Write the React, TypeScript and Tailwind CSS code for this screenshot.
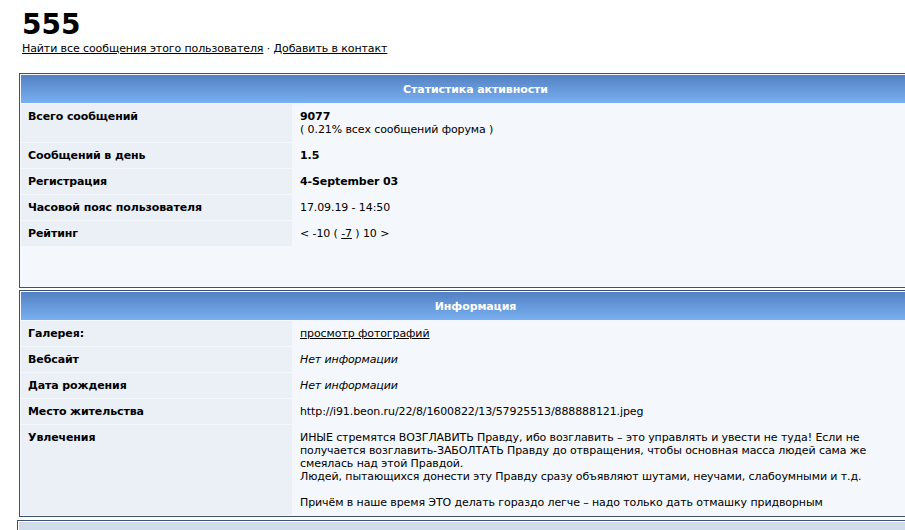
import React from 'react';

const font = { fontFamily: '"DejaVu Sans", Verdana, sans-serif' };

interface Row {
  label: string;
  value: React.ReactNode;
}

const statRows: Row[] = [
  {
    label: 'Всего сообщений',
    value: (
      <>
        <b>9077</b>
        <br />( 0.21% всех сообщений форума )
      </>
    ),
  },
  { label: 'Сообщений в день', value: <b>1.5</b> },
  { label: 'Регистрация', value: <b>4-September 03</b> },
  { label: 'Часовой пояс пользователя', value: '17.09.19 - 14:50' },
  {
    label: 'Рейтинг',
    value: (
      <>
        &lt; -10 ( <span className="underline">-7</span> ) 10 &gt;
      </>
    ),
  },
];

const infoRows: Row[] = [
  { label: 'Галерея:', value: <span className="underline">просмотр фотографий</span> },
  { label: 'Вебсайт', value: <i>Нет информации</i> },
  { label: 'Дата рождения', value: <i>Нет информации</i> },
  { label: 'Место жительства', value: 'http://i91.beon.ru/22/8/1600822/13/57925513/888888121.jpeg' },
  {
    label: 'Увлечения',
    value: (
      <>
        ИНЫЕ стремятся ВОЗГЛАВИТЬ Правду, ибо возглавить – это управлять и увести не туда! Если не
        <br />
        получается возглавить-ЗАБОЛТАТЬ Правду до отвращения, чтобы основная масса людей сама же
        <br />
        смеялась над этой Правдой.
        <br />
        Людей, пытающихся донести эту Правду сразу объявляют шутами, неучами, слабоумными и т.д.
        <br />
        <br />
        Причём в наше время ЭТО делать гораздо легче – надо только дать отмашку придворным
      </>
    ),
  },
];

const Panel: React.FC<{ title: string; rows: Row[]; extra?: boolean }> = ({ title, rows, extra }) => (
  <div className="w-[913px] ml-[19px] border border-[#3d5273] p-px bg-[#f4f7fc]">
    <div className="h-[28px] flex items-center justify-center font-bold text-white bg-gradient-to-b from-[#5381c3] to-[#79b0f1]">
      {title}
    </div>
    <div className="flex flex-col gap-px pt-px">
      {rows.map((r) => (
        <div key={r.label} className="flex gap-px">
          <div className="w-[271px] shrink-0 bg-[#ebeff6] px-[7px] py-[6px] font-bold">{r.label}</div>
          <div className="flex-1 px-[7px] py-[6px] whitespace-nowrap">{r.value}</div>
        </div>
      ))}
    </div>
    {extra && <div className="h-[40px]" />}
  </div>
);

export default function App() {
  return (
    <div
      className="w-[905px] h-[530px] overflow-hidden bg-white text-black text-[11px] leading-[13px] tracking-[-0.1px]"
      style={font}
    >
      <div className="pl-[22px] pt-[9px]">
        <h1 className="text-[28px] leading-[32px] font-bold tracking-normal">555</h1>
        <div className="mt-[1px]">
          <span className="underline">Найти все сообщения этого пользователя</span> ·{' '}
          <span className="underline">Добавить в контакт</span>
        </div>
      </div>
      <div className="mt-[18px]">
        <Panel title="Статистика активности" rows={statRows} extra />
      </div>
      <div className="mt-[2px]">
        <Panel title="Информация" rows={infoRows} />
      </div>
      <div className="mt-[3px] w-[915px] ml-[17px] h-[40px] border border-[#3d5273] p-px bg-white">
        <div className="h-full bg-[#d0dcea]" />
      </div>
    </div>
  );
}
